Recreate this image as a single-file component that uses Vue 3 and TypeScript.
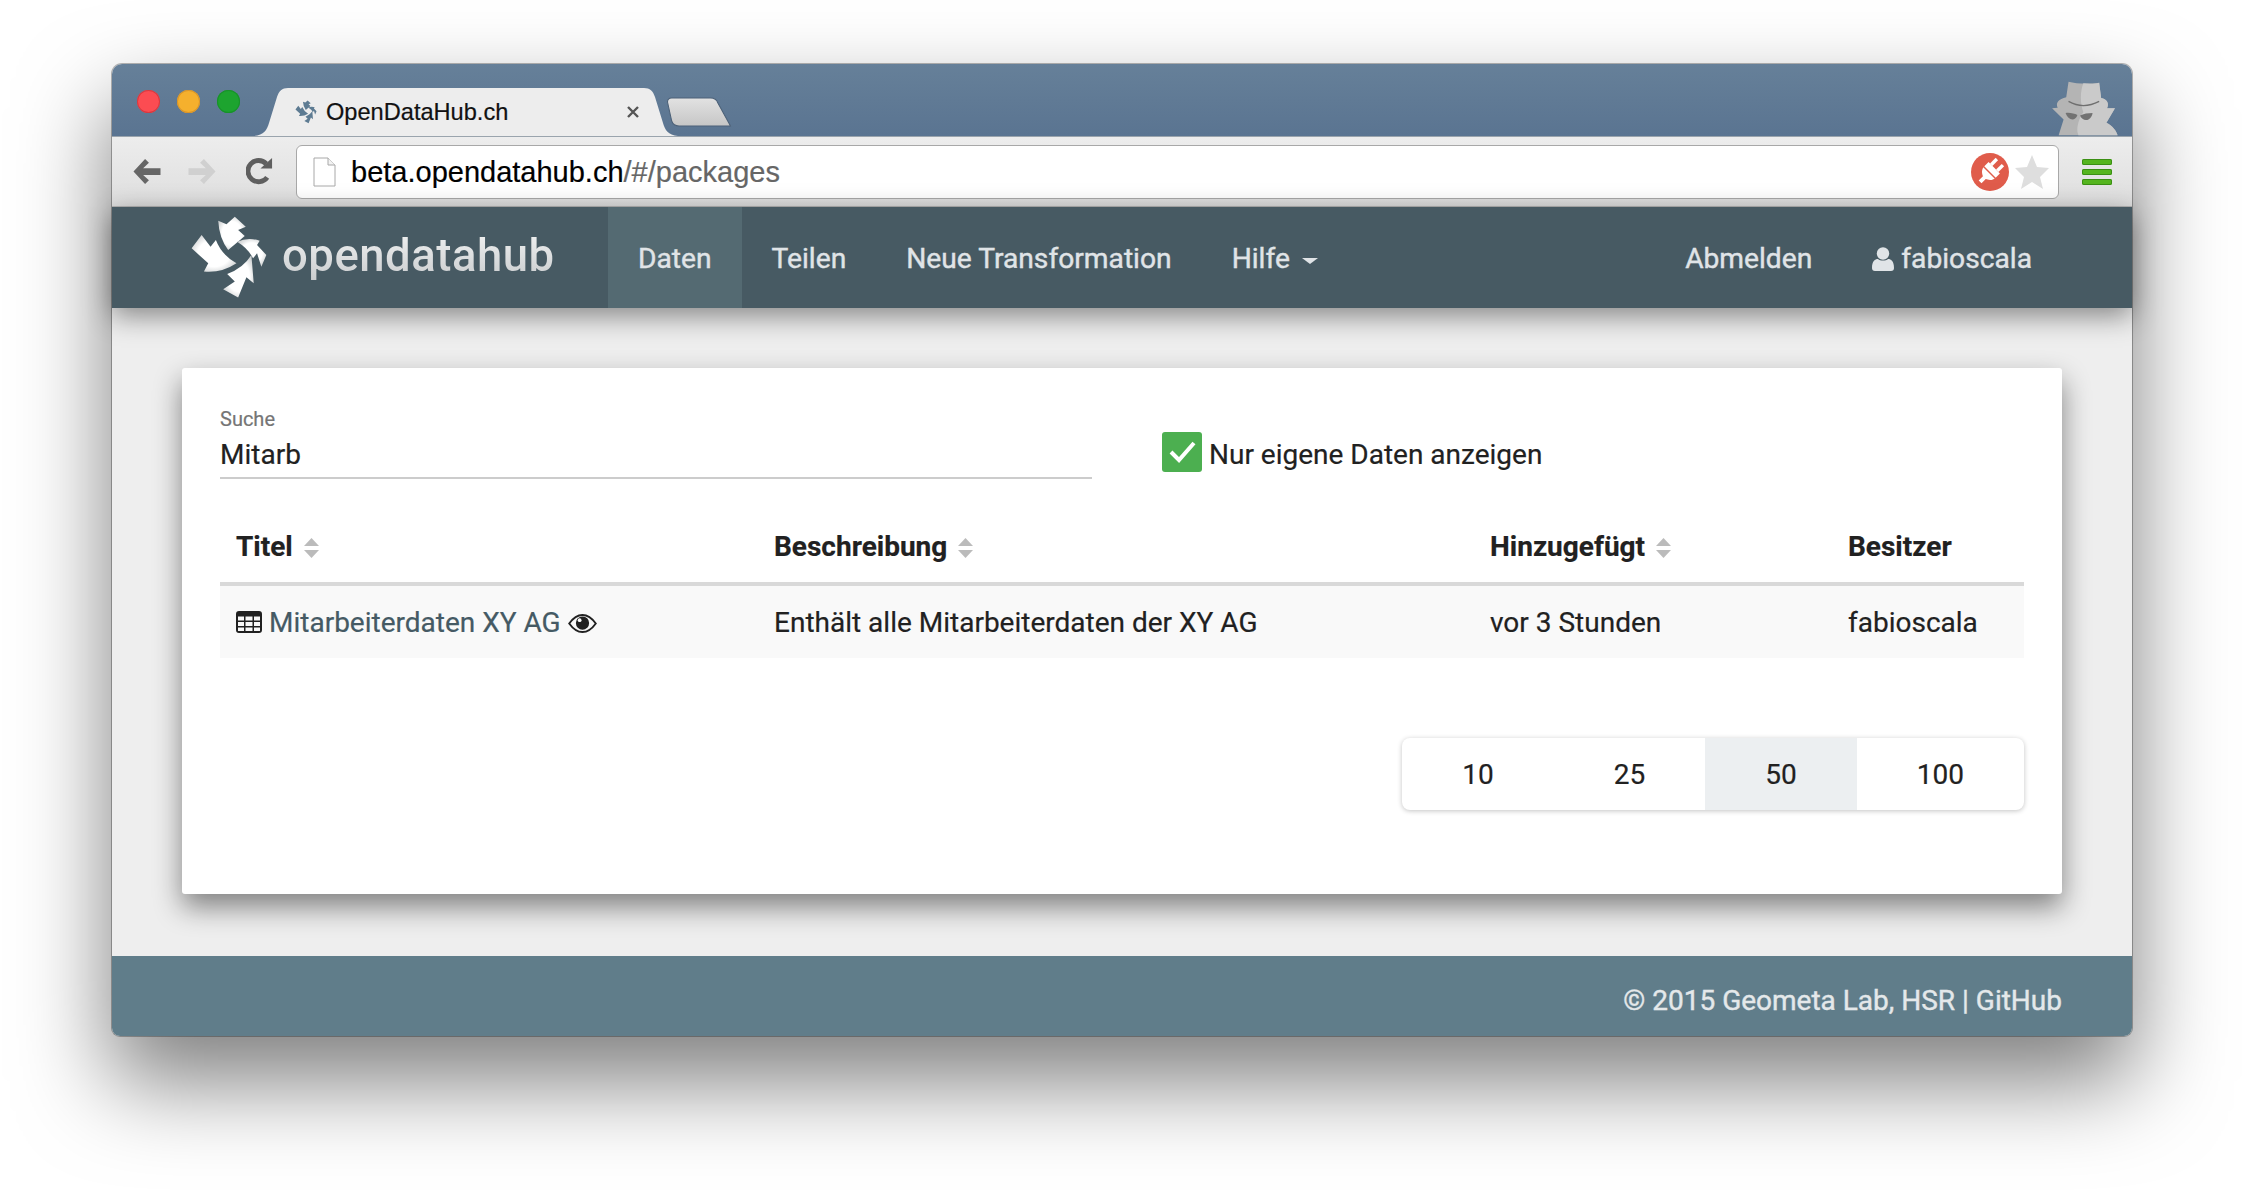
<script setup lang="ts">
const arrows: string[] = [
  'M115 52 L140 62 L165 40 L198 70 L175 80 L195 98 L145 140 Q118 105 115 52Z',
  'M172 115 Q205 100 240 112 L232 125 L260 155 L245 190 L232 150 L220 165 Q205 135 172 115Z',
  'M215 155 L222 240 L200 222 L175 283 L130 258 L165 235 L142 212 Q190 195 215 155Z',
  'M35 135 L65 95 L92 130 L108 110 Q125 155 170 180 Q125 210 72 205 L85 180Z',
]

const navLinks: string[] = ['Teilen', 'Neue Transformation']
const pageSizes: number[] = [10, 25, 50, 100]
const activeSize = 50
</script>

<template>
  <div class="page">
    <div class="window">
      <div class="titlebar">
        <div class="lights">
          <span class="light red"></span>
          <span class="light yellow"></span>
          <span class="light green"></span>
        </div>
        <div class="tab">
          <svg class="tab-bg" viewBox="0 0 424 48" width="424" height="48">
            <path d="M0 48 C10 47 13 42 15 35 L23 9 C25 3 28 0 34 0 L390 0 C396 0 399 3 401 9 L409 35 C411 42 414 47 424 48Z" fill="#ededed" />
          </svg>
          <svg class="favicon" viewBox="30 35 235 255" width="22" height="24">
            <path v-for="d in arrows" :key="d" :d="d" fill="#5d7b92" />
          </svg>
          <span class="tab-title">OpenDataHub.ch</span>
          <svg class="tab-close" viewBox="0 0 14 14" width="14" height="14">
            <path d="M2 2 L12 12 M12 2 L2 12" stroke="#555" stroke-width="2.4" />
          </svg>
        </div>
        <svg class="new-tab" viewBox="0 0 62 30" width="62" height="30">
          <defs>
            <linearGradient id="newtab" x1="0" y1="0" x2="0" y2="1">
              <stop offset="0" stop-color="#e2e2e2" />
              <stop offset="1" stop-color="#c6c6c6" />
            </linearGradient>
          </defs>
          <path d="M5 1 L42 1 C46 1 48 3 49 6 L61 29 L12 29 C8 29 6 27 5 24 L1 5 C1 3 2 1 5 1Z" fill="url(#newtab)" stroke="#4c6178" stroke-width="1" />
        </svg>
        <svg class="incognito" viewBox="150 60 210 170" width="70" height="56">
          <path d="M205 65 C230 72 270 72 298 68 L304 115 C320 118 330 130 322 146 L346 146 L320 190 C340 200 350 215 354 228 L175 228 L190 180 L155 146 L172 144 C165 128 175 118 198 112Z" fill="#b4b4b4" />
          <path d="M250 70 C265 72 285 72 298 68 L304 115 C320 118 330 130 322 146 L346 146 L320 190 C340 200 350 215 354 228 L235 228 C225 205 240 170 250 158 C240 130 240 95 250 70Z" fill="#cacaca" />
          <path d="M205 125 C235 142 265 142 298 125" fill="none" stroke="#6f6f6f" stroke-width="4" />
          <path d="M196 160 C210 158 222 162 232 166 C226 186 204 184 196 160Z M240 168 C250 162 265 160 278 160 C274 186 248 188 240 168Z" fill="#727272" />
        </svg>
      </div>

      <div class="toolbar">
        <svg class="tool back" viewBox="0 0 30 28" width="30" height="27">
          <path d="M13 1 L1 14 L13 27 L17 23 L11 17.5 L29 17.5 L29 10.5 L11 10.5 L17 5Z" fill="#666" />
        </svg>
        <svg class="tool forward" viewBox="0 0 30 28" width="30" height="27">
          <path d="M17 1 L29 14 L17 27 L13 23 L19 17.5 L1 17.5 L1 10.5 L19 10.5 L13 5Z" fill="#d0d0d0" />
        </svg>
        <svg class="tool reload" viewBox="0 0 28 28" width="27" height="27">
          <path d="M22 20 A11 11 0 1 1 21 6" fill="none" stroke="#5f5f5f" stroke-width="5" />
          <path d="M15 11 L27 11 L27 0Z" fill="#5f5f5f" />
        </svg>
        <div class="address">
          <svg class="file" viewBox="0 0 23 30" width="23" height="30">
            <path d="M1 1 L15 1 L22 8 L22 29 L1 29Z" fill="#fff" stroke="#a8a8a8" />
            <path d="M15 1 L15 8 L22 8" fill="#f2f2f2" stroke="#a8a8a8" />
          </svg>
          <span class="url"><b>beta.opendatahub.ch</b>/#/packages</span>
          <svg class="plug" viewBox="0 0 38 38" width="38" height="38">
            <circle cx="19" cy="19" r="19" fill="#e05c4b" />
            <g transform="rotate(45 19 19)" fill="#fff">
              <path d="M11 13 L27 13 L27 19 C27 24 23 26 21 27 L21 33 L17 33 L17 27 C15 26 11 24 11 19Z" />
              <rect x="13" y="5" width="3.4" height="8" />
              <rect x="21.6" y="5" width="3.4" height="8" />
            </g>
            <path d="M11 12 L27 28" stroke="#e05c4b" stroke-width="1.4" />
          </svg>
          <svg class="star" viewBox="0 0 36 36" width="36" height="36">
            <path d="M18 1 L23 13 L35 14 L26 23 L29 35 L18 28 L7 35 L10 23 L1 14 L13 13Z" fill="#dedede" />
          </svg>
        </div>
        <div class="menu">
          <span></span>
          <span></span>
          <span></span>
        </div>
      </div>

      <nav class="navbar">
        <a class="brand">
          <svg class="logo" viewBox="30 35 235 255" width="78" height="85">
            <defs>
              <radialGradient id="logofill" cx="0.5" cy="0.5" r="0.6">
                <stop offset="0.6" stop-color="#fff" />
                <stop offset="1" stop-color="#c9cccd" />
              </radialGradient>
            </defs>
            <path v-for="d in arrows" :key="d" :d="d" fill="url(#logofill)" />
          </svg>
          <span class="brand-name">opendatahub</span>
        </a>
        <a class="nav-link active">Daten</a>
        <a v-for="link in navLinks" :key="link" class="nav-link">{{ link }}</a>
        <a class="nav-link">Hilfe<i class="caret"></i></a>
        <div class="nav-right">
          <a class="nav-link">Abmelden</a>
          <a class="nav-link user">
            <svg viewBox="0 0 22 24" width="22" height="24">
              <circle cx="11" cy="6.5" r="6.2" fill="#e0e4e7" />
              <path d="M0 21 C0 14 3 12 6 12 C8 14 14 14 16 12 C19 12 22 14 22 21 C22 23 21 24 19 24 L3 24 C1 24 0 23 0 21Z" fill="#e0e4e7" />
            </svg>
            fabioscala
          </a>
        </div>
      </nav>

      <main class="content">
        <section class="card">
          <div class="filters">
            <label class="search">
              <span class="search-label">Suche</span>
              <span class="search-value">Mitarb</span>
            </label>
            <div class="own-data">
              <span class="checkbox">
                <svg viewBox="0 0 40 40" width="40" height="40">
                  <path d="M9 20 L17 28 L32 11" fill="none" stroke="#fff" stroke-width="4" />
                </svg>
              </span>
              Nur eigene Daten anzeigen
            </div>
          </div>

          <table class="packages">
            <colgroup>
              <col class="col-title" />
              <col class="col-desc" />
              <col class="col-date" />
              <col />
            </colgroup>
            <thead>
              <tr>
                <th v-for="h in ['Titel', 'Beschreibung', 'Hinzugefügt']" :key="h">
                  {{ h }}
                  <svg class="sort" viewBox="0 0 15 20" width="15" height="20">
                    <path d="M7.5 0 L15 8 L0 8Z M7.5 20 L15 12 L0 12Z" fill="#bbb" />
                  </svg>
                </th>
                <th>Besitzer</th>
              </tr>
            </thead>
            <tbody>
              <tr>
                <td>
                  <svg class="table-icon" viewBox="0 0 26 22" width="26" height="22">
                    <path fill-rule="evenodd" fill="#212121" d="M3 0 H23 C25 0 26 1 26 3 V19 C26 21 25 22 23 22 H3 C1 22 0 21 0 19 V3 C0 1 1 0 3 0Z M2 5.5 V9.5 H8 V5.5Z M9.5 5.5 V9.5 H16.5 V5.5Z M18 5.5 V9.5 H24 V5.5Z M2 11 V15 H8 V11Z M9.5 11 V15 H16.5 V11Z M18 11 V15 H24 V11Z M2 16.5 V20 H8 V16.5Z M9.5 16.5 V20 H16.5 V16.5Z M18 16.5 V20 H24 V16.5Z" />
                  </svg>
                  <a class="title-link">Mitarbeiterdaten XY AG</a>
                  <svg class="eye" viewBox="0 0 30 20" width="29" height="19">
                    <path d="M1 10 C6 3 10 1 15 1 C20 1 24 3 29 10 C24 17 20 19 15 19 C10 19 6 17 1 10Z" fill="none" stroke="#212121" stroke-width="2" />
                    <circle cx="15" cy="9.5" r="7" fill="#212121" />
                    <circle cx="12" cy="6.5" r="2" fill="#fff" />
                  </svg>
                </td>
                <td>Enthält alle Mitarbeiterdaten der XY AG</td>
                <td>vor 3 Stunden</td>
                <td>fabioscala</td>
              </tr>
            </tbody>
          </table>

          <div class="pager-row">
            <div class="pager">
              <span v-for="size in pageSizes" :key="size" class="page-size" :class="{ active: size === activeSize }">{{ size }}</span>
            </div>
          </div>
        </section>
      </main>

      <footer class="footer">© 2015 Geometa Lab, HSR | GitHub</footer>
    </div>
  </div>
</template>

<style>
html,
body {
  margin: 0;
  background: #fff;
}
</style>

<style scoped>
.page {
  height: 1196px;
  box-sizing: border-box;
  padding: 64px 112px 0;
  overflow: hidden;
  font-family: Roboto, "Liberation Sans", sans-serif;
  font-size: 28px;
  color: #212121;
  -webkit-text-stroke: 0.2px;
}

.window {
  position: relative;
  width: 2020px;
  border-radius: 10px 10px 8px 8px;
  box-shadow: 0 0 0 1px rgba(0, 0, 0, 0.28), 0 44px 90px 2px rgba(0, 0, 0, 0.5);
}

.titlebar {
  position: relative;
  display: flex;
  align-items: flex-end;
  height: 72px;
  border-radius: 10px 10px 0 0;
  background: linear-gradient(#668099, #5a7491);
}

.lights {
  display: flex;
  gap: 17px;
  align-self: flex-start;
  padding: 26px 0 0 25px;
}

.light {
  width: 23px;
  height: 23px;
  border-radius: 50%;
}

.red {
  background: #fc4c52;
  box-shadow: inset 0 0 0 1px #d63a40;
}

.yellow {
  background: #f5b02d;
  box-shadow: inset 0 0 0 1px #d9952a;
}

.green {
  background: #1da42f;
  box-shadow: inset 0 0 0 1px #18922a;
}

.tab {
  position: relative;
  display: flex;
  align-items: center;
  width: 424px;
  height: 48px;
  box-sizing: border-box;
  margin-left: 14px;
  padding: 0 38px 0 41px;
}

.tab-bg {
  position: absolute;
  left: 0;
  top: 0;
}

.favicon {
  position: relative;
  margin-right: 9px;
}

.tab-title {
  position: relative;
  font-family: "Liberation Sans", sans-serif;
  font-size: 23.6px;
  color: #111;
}

.tab-close {
  position: relative;
  margin-left: auto;
}

.new-tab {
  margin: 0 0 9px -10px;
  transform: scaleX(1.05);
}

.incognito {
  position: absolute;
  right: 12px;
  bottom: 0;
}

.toolbar {
  display: flex;
  align-items: center;
  height: 71px;
  box-sizing: border-box;
  padding: 0 20px;
  border-top: 1px solid #9aa4ad;
  border-bottom: 1px solid #b5b5b5;
  background: linear-gradient(#ededed, #dedede);
}

.tool {
  flex: none;
}

.forward {
  margin-left: 25px;
}

.reload {
  margin-left: 29px;
}

.address {
  display: flex;
  align-items: center;
  flex: 1;
  height: 54px;
  box-sizing: border-box;
  margin-left: 23px;
  padding: 0 8px 0 16px;
  border: 1px solid #a8a8a8;
  border-radius: 6px;
  background: #fff;
}

.url {
  margin: 2px 0 0 15px;
  font-family: "Liberation Sans", sans-serif;
  font-size: 29px;
  color: #666;
}

.url b {
  font-weight: 400;
  color: #000;
}

.plug {
  margin-left: auto;
}

.star {
  margin-left: 5px;
}

.menu {
  display: flex;
  flex-direction: column;
  gap: 4px;
  width: 30px;
  margin-left: 23px;
}

.menu span {
  height: 6px;
  border-radius: 2px;
  background: #55b51f;
  box-shadow: inset 0 0 0 1px #3b8f14;
}

.navbar {
  position: relative;
  display: flex;
  align-items: stretch;
  height: 101px;
  box-sizing: border-box;
  padding: 0 70px 0 78px;
  background: #475a63;
  color: #e0e4e7;
  font-size: 28.2px;
  -webkit-text-stroke: 0.4px;
  box-shadow: 0 8px 26px rgba(0, 0, 0, 0.44);
}

.brand {
  display: flex;
  align-items: center;
  width: 418px;
  flex: none;
}

.brand-name {
  margin: -5px 0 0 14px;
  font-size: 45.5px;
  font-weight: 500;
  letter-spacing: 0.5px;
  -webkit-text-stroke: 0;
  background: linear-gradient(#f2f3f3, #c8cbcd);
  -webkit-background-clip: text;
  background-clip: text;
  color: transparent;
}

.nav-link {
  display: flex;
  align-items: center;
  padding: 2px 30px 0;
}

.nav-link.active {
  background: #546a72;
}

.caret {
  width: 0;
  height: 0;
  margin: 4px 0 0 12px;
  border-top: 6px solid #e0e4e7;
  border-left: 8px solid transparent;
  border-right: 8px solid transparent;
}

.nav-right {
  display: flex;
  margin-left: auto;
}

.user svg {
  margin-right: 7px;
}

.content {
  padding: 60px 70px 62px;
  background: #eee;
}

.card {
  height: 526px;
  box-sizing: border-box;
  padding: 38px 38px 0;
  border-radius: 3px;
  background: #fff;
  box-shadow: 0 13px 28px rgba(0, 0, 0, 0.46);
}

.filters {
  display: flex;
  align-items: flex-end;
}

.search {
  display: flex;
  flex-direction: column;
  width: 872px;
  height: 73px;
  box-sizing: border-box;
  padding-top: 1px;
  border-bottom: 2px solid #ccc;
}

.search-label {
  font-size: 20px;
  line-height: 24px;
  color: #757575;
}

.search-value {
  line-height: 40px;
  margin-top: 4px;
}

.own-data {
  display: flex;
  align-items: center;
  gap: 7px;
  height: 44px;
  margin: 0 0 3px 70px;
}

.checkbox {
  display: block;
  width: 40px;
  height: 40px;
  margin-top: -4px;
  border-radius: 3px;
  background: #4caf50;
}

.packages {
  width: 100%;
  margin-top: 30px;
  border-collapse: collapse;
  table-layout: fixed;
}

.col-title {
  width: 538px;
}

.col-desc {
  width: 716px;
}

.col-date {
  width: 358px;
}

.packages th {
  height: 71px;
  padding: 2px 16px 0;
  border-bottom: 4px solid #d9d9d9;
  font-weight: 700;
  text-align: left;
}

.packages td {
  height: 72px;
  padding: 0 16px;
  background: #f9f9f9;
}

.sort {
  margin-left: 4px;
  vertical-align: -2px;
}

.table-icon {
  margin-right: 7px;
  vertical-align: -1px;
}

.title-link {
  color: #455a64;
}

.eye {
  margin-left: 7px;
  vertical-align: -1px;
}

.pager-row {
  display: flex;
  justify-content: flex-end;
  margin-top: 80px;
}

.pager {
  display: flex;
  height: 72px;
  overflow: hidden;
  border-radius: 8px;
  box-shadow: 0 1px 5px rgba(0, 0, 0, 0.24);
}

.page-size {
  display: flex;
  align-items: center;
  padding: 0 60px;
}

.page-size.active {
  background: #eceff1;
}

.footer {
  display: flex;
  align-items: center;
  justify-content: flex-end;
  height: 80px;
  box-sizing: border-box;
  padding: 8px 70px 0 0;
  border-radius: 0 0 8px 8px;
  background: #607d8a;
  color: #e4e8ea;
  -webkit-text-stroke: 0.4px;
}
</style>
